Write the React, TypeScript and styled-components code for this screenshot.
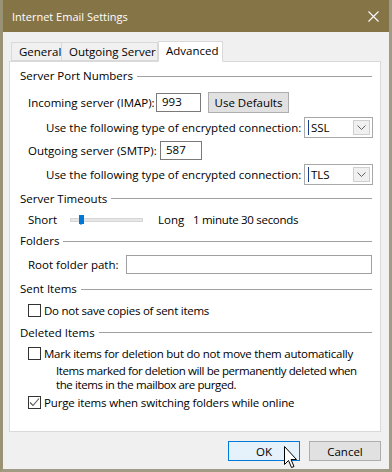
import React from 'react'
import styled, { createGlobalStyle } from 'styled-components'

const GlobalStyle = createGlobalStyle`
  html, body {
    margin: 0;
    padding: 0;
    background: #9a9274;
  }
  body {
    font-family: "Open Sans", "Noto Sans", sans-serif;
    font-size: 11.5px;
    color: #000;
  }
`

const Window = styled.div`
  width: 392px;
  height: 472px;
  box-sizing: border-box;
  border-left: 3px solid #9a9274;
  border-right: 3px solid #a19b86;
  border-bottom: 3px solid #a19b86;
  display: flex;
  flex-direction: column;
  position: relative;
  overflow: hidden;
`

const TitleBar = styled.div`
  height: 32px;
  flex: none;
  background: #857446;
  color: #fff;
  display: flex;
  align-items: center;
  justify-content: space-between;
  padding: 0 10px 0 9px;
  font-size: 11px;
`

const Body = styled.div`
  flex: 1;
  background: #f0f0f0;
  padding: 8px 0 0 6px;
  display: flex;
  flex-direction: column;
`

const TabStrip = styled.div`
  height: 21px;
  display: flex;
  align-items: flex-end;
  padding-left: 2px;
  position: relative;
  z-index: 1;
`

const Tab = styled.div<{ $active?: boolean; $w: number }>`
  width: ${(p) => p.$w}px;
  height: ${(p) => (p.$active ? 21 : 19)}px;
  box-sizing: border-box;
  border: 1px solid #d9d9d9;
  border-bottom-color: ${(p) => (p.$active ? '#fff' : '#d9d9d9')};
  border-left-width: ${(p) => (p.$active ? 1 : 0)}px;
  background: ${(p) => (p.$active ? '#fff' : '#f0f0f0')};
  padding-left: 7px;
  line-height: ${(p) => (p.$active ? 17 : 18)}px;
  margin-bottom: ${(p) => (p.$active ? -1 : 0)}px;
  white-space: nowrap;
  &:first-child {
    border-left-width: 1px;
  }
`

const Panel = styled.div`
  width: 372px;
  height: 371px;
  box-sizing: border-box;
  border: 1px solid #d9d9d9;
  background: #fff;
  padding: 0 8px 0 10px;
  display: flex;
  flex-direction: column;
`

const Row = styled.div<{ $h: number; $indent?: number }>`
  height: ${(p) => p.$h}px;
  display: flex;
  align-items: center;
  padding-left: ${(p) => p.$indent ?? 0}px;
  white-space: nowrap;
`

const GroupHeader = styled(Row)`
  &::after {
    content: '';
    flex: 1;
    height: 1px;
    background: #a0a0a0;
    margin-left: 4px;
    margin-top: 1px;
  }
`

const Label = styled.span<{ $w?: number; $tight?: number }>`
  display: inline-block;
  width: ${(p) => (p.$w ? `${p.$w}px` : 'auto')};
  letter-spacing: ${(p) => p.$tight ?? 0}px;
  flex: none;
`

const TextBox = styled.div<{ $w: number; $soft?: boolean }>`
  width: ${(p) => p.$w}px;
  height: 19px;
  box-sizing: border-box;
  border: 1px solid ${(p) => (p.$soft ? '#a0a0a0' : '#7a7a7a')};
  background: #fff;
  padding-left: 5px;
  line-height: 16px;
  flex: none;
`

const Button = styled.div<{ $primary?: boolean; $w: number; $h: number; $ml?: number }>`
  width: ${(p) => p.$w}px;
  height: ${(p) => p.$h}px;
  margin-left: ${(p) => p.$ml ?? 0}px;
  box-sizing: border-box;
  border: 1px solid ${(p) => (p.$primary ? '#0078d7' : '#adadad')};
  background: ${(p) => (p.$primary ? '#e5f1fb' : '#e1e1e1')};
  display: flex;
  align-items: center;
  justify-content: center;
  flex: none;
`

const Select = styled.div`
  width: 69px;
  height: 21px;
  box-sizing: border-box;
  border: 1px solid #a8a8a8;
  background: #fff;
  display: flex;
  align-items: center;
  padding: 0 2px 0 3px;
  flex: none;
`

const SelectValue = styled.span`
  flex: 1;
  border-left: 1px solid #1a3f8a;
  padding-left: 2px;
  line-height: 15px;
`

const SelectArrow = styled.div`
  width: 17px;
  height: 15px;
  box-sizing: border-box;
  border: 1px solid #cfcfcf;
  background: #f0f0f0;
  display: flex;
  align-items: center;
  justify-content: center;
`

const SliderTrack = styled.div`
  width: 73px;
  height: 4px;
  box-sizing: border-box;
  background: #e7e7e7;
  border: 1px solid #d6d6d6;
  position: relative;
  margin: 0 15px 0 14px;
  flex: none;
`

const SliderThumb = styled.div`
  position: absolute;
  left: 8px;
  top: -4px;
  width: 5px;
  height: 9px;
  background: #0078d7;
  &::after {
    content: '';
    position: absolute;
    left: 0;
    top: 8px;
    border-left: 2.5px solid transparent;
    border-right: 2.5px solid transparent;
    border-top: 2px solid #0078d7;
  }
`

const CheckBox = styled.div`
  width: 13px;
  height: 13px;
  box-sizing: border-box;
  border: 1px solid #333;
  background: #fff;
  margin-right: 3px;
  flex: none;
  display: flex;
  align-items: center;
  justify-content: center;
`

const Note = styled.div`
  padding-left: 36px;
  line-height: 14px;
  height: 28px;
  white-space: nowrap;
  letter-spacing: -0.4px;
`

const ButtonBar = styled.div`
  display: flex;
  gap: 9px;
  padding-left: 219px;
  margin-top: 9px;
`

const Cursor = styled.svg`
  position: absolute;
  left: 281px;
  top: 446px;
`

const Chevron = () => (
  <svg width="9" height="5" viewBox="0 0 9 5">
    <path d="M0.5 0.5 L4.5 4.5 L8.5 0.5" stroke="#606060" fill="none" />
  </svg>
)

const App: React.FC = () => {
  return (
    <>
      <GlobalStyle />
      <Window>
        <TitleBar>
          <span>Internet Email Settings</span>
          <svg width="11" height="11" viewBox="0 0 11 11">
            <path d="M0.5 0.5 L10.5 10.5 M10.5 0.5 L0.5 10.5" stroke="#fff" strokeWidth="1.1" />
          </svg>
        </TitleBar>
        <Body>
          <TabStrip>
            <Tab $w={51}>General</Tab>
            <Tab $w={96}>Outgoing Server</Tab>
            <Tab $w={65} $active>Advanced</Tab>
          </TabStrip>
          <Panel>
            <GroupHeader $h={27}>Server Port Numbers</GroupHeader>
            <Row $h={26} $indent={8}>
              <Label $w={128}>Incoming server (IMAP):</Label>
              <TextBox $w={45}>993</TextBox>
              <Button $w={81} $h={21} $ml={7}>Use Defaults</Button>
            </Row>
            <Row $h={24} $indent={26}>
              <Label $w={258}>Use the following type of encrypted connection:</Label>
              <Select>
                <SelectValue>SSL</SelectValue>
                <SelectArrow>
                  <Chevron />
                </SelectArrow>
              </Select>
            </Row>
            <Row $h={23} $indent={8}>
              <Label $w={132}>Outgoing server (SMTP):</Label>
              <TextBox $w={42}>587</TextBox>
            </Row>
            <Row $h={25} $indent={26}>
              <Label $w={258}>Use the following type of encrypted connection:</Label>
              <Select>
                <SelectValue>TLS</SelectValue>
                <SelectArrow>
                  <Chevron />
                </SelectArrow>
              </Select>
            </Row>
            <GroupHeader $h={22}>Server Timeouts</GroupHeader>
            <Row $h={21} $indent={8}>
              <Label $w={28}>Short</Label>
              <SliderTrack>
                <SliderThumb />
              </SliderTrack>
              <Label $w={35}>Long</Label>
              <Label $tight={-0.3}>1 minute 30 seconds</Label>
            </Row>
            <GroupHeader $h={21}>Folders</GroupHeader>
            <Row $h={26} $indent={8}>
              <Label $w={98}>Root folder path:</Label>
              <TextBox $w={246} $soft />
            </Row>
            <GroupHeader $h={23}>Sent Items</GroupHeader>
            <Row $h={21} $indent={8}>
              <CheckBox />
              <Label $tight={-0.25}>Do not save copies of sent items</Label>
            </Row>
            <GroupHeader $h={22}>Deleted Items</GroupHeader>
            <Row $h={21} $indent={8}>
              <CheckBox />
              <Label $tight={-0.25}>Mark items for deletion but do not move them automatically</Label>
            </Row>
            <Note>
              Items marked for deletion will be permanently deleted when
              <br />
              the items in the mailbox are purged.
            </Note>
            <Row $h={20} $indent={8}>
              <CheckBox>
                <svg width="11" height="11" viewBox="0 0 11 11">
                  <path d="M1 5.5 L4 8.5 L10 1.5" stroke="#555" strokeWidth="1.1" fill="none" />
                </svg>
              </CheckBox>
              <Label $tight={-0.15}>Purge items when switching folders while online</Label>
            </Row>
          </Panel>
          <ButtonBar>
            <Button $primary $w={72} $h={20}>OK</Button>
            <Button $w={72} $h={20}>Cancel</Button>
          </ButtonBar>
        </Body>
        <Cursor width="14" height="24" viewBox="0 0 14 24">
          <path
            d="M0.5 0.5 L0.5 18.5 L4.5 14.5 L7.5 21.5 L10 20.5 L7 13.5 L12.5 13.5 Z"
            fill="#fff"
            stroke="#000"
            strokeWidth="1"
          />
        </Cursor>
      </Window>
    </>
  )
}

export default App
